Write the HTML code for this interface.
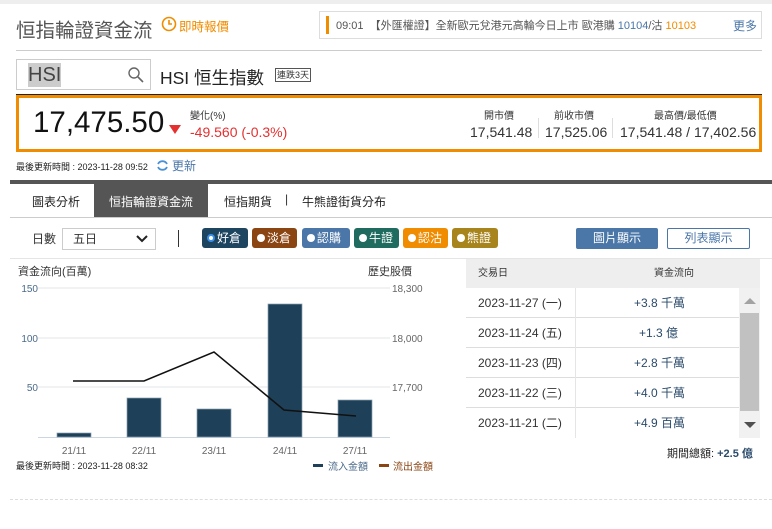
<!DOCTYPE html>
<html><head><meta charset="utf-8"><style>
*{margin:0;padding:0;box-sizing:border-box}
body{width:772px;height:529px;background:#fff;font-family:"Liberation Sans","Noto Sans CJK TC",sans-serif;color:#333;position:relative;overflow:hidden}
.a{position:absolute;white-space:nowrap}
.btn{position:absolute;top:228px;height:20px;color:#fff;font-size:12px;line-height:20px;border-radius:3px;padding-left:5px}
.btn i{display:inline-block;width:8px;height:8px;border-radius:50%;background:#fff;margin-right:2px;vertical-align:0}
.row{position:absolute;left:466px;width:273px;height:30px;border-bottom:1px solid #ddd;font-size:12px;line-height:30px}
.row span{position:absolute}
</style></head><body>
<div class="a" style="left:0;top:0;width:772px;height:4px;background:#eee"></div>
<div class="a" style="left:16px;top:14px;font-size:19.5px;color:#555">恒指輪證資金流</div>
<svg class="a" style="left:161px;top:16px" width="16" height="16"><circle cx="8" cy="8" r="6.5" fill="none" stroke="#f08c00" stroke-width="1.6"/><path d="M8 4v4h3" fill="none" stroke="#f08c00" stroke-width="1.6"/></svg>
<div class="a" style="left:179px;top:16px;font-size:12.5px;color:#f08c00">即時報價</div>
<div class="a" style="left:319px;top:11px;width:443px;height:28px;border:1px solid #ddd"></div>
<div class="a" style="left:326px;top:16px;width:3px;height:18px;background:#f08c00"></div>
<div class="a" style="left:336px;top:17px;font-size:11px;color:#555">09:01 &nbsp;【外匯權證】全新歐元兌港元高輪今日上市 歐港購 <b style="color:#4a76a8;font-weight:normal">10104</b>/沽 <b style="color:#f08c00;font-weight:normal">10103</b></div>
<div class="a" style="left:733px;top:17px;font-size:12px;color:#4a76a8">更多</div>
<div class="a" style="left:16px;top:50px;width:746px;height:1px;background:#ccc"></div>
<div class="a" style="left:16px;top:59px;width:135px;height:31px;border:1px solid #ccc"></div>
<div class="a" style="left:28px;top:63px;font-size:20px;background:#ccc;color:#444;line-height:24px">HSI</div>
<svg class="a" style="left:127px;top:66px" width="18" height="18"><circle cx="7" cy="7" r="5" fill="none" stroke="#666" stroke-width="1.4"/><path d="M11 11l5 5" stroke="#666" stroke-width="1.6"/></svg>
<div class="a" style="left:160px;top:65px;font-size:17.5px;color:#222">HSI 恒生指數</div>
<div class="a" style="left:275px;top:68px;font-size:9px;border:1px solid #555;padding:0 1px;line-height:12px">連跌3天</div>
<div class="a" style="left:16px;top:94px;width:746px;height:1px;background:#222"></div>
<div class="a" style="left:16px;top:95px;width:746px;height:57px;border:3px solid #f08c00"></div>
<div class="a" style="left:33px;top:106px;font-size:29.5px;color:#111">17,475.50</div>
<div class="a" style="left:169px;top:125px;width:0;height:0;border-left:6px solid transparent;border-right:6px solid transparent;border-top:9px solid #e53030"></div>
<div class="a" style="left:190px;top:107px;font-size:10px">變化(%)</div>
<div class="a" style="left:190px;top:124px;font-size:14px;color:#e53030">-49.560 (-0.3%)</div>
<div class="a" style="left:484px;top:107px;font-size:10px">開市價</div>
<div class="a" style="left:470px;top:124px;font-size:14px">17,541.48</div>
<div class="a" style="left:538px;top:118px;width:1px;height:20px;background:#ddd"></div>
<div class="a" style="left:554px;top:107px;font-size:10px">前收市價</div>
<div class="a" style="left:545px;top:124px;font-size:14px">17,525.06</div>
<div class="a" style="left:612px;top:118px;width:1px;height:20px;background:#ddd"></div>
<div class="a" style="left:654px;top:107px;font-size:10px">最高價/最低價</div>
<div class="a" style="left:620px;top:124px;font-size:14px">17,541.48 / 17,402.56</div>
<div class="a" style="left:16px;top:160px;font-size:9px;color:#222">最後更新時間 : 2023-11-28 09:52</div>
<svg class="a" style="left:156px;top:159px" width="13" height="13"><path d="M11 5A5 5 0 0 0 2 5M2 8a5 5 0 0 0 9 0" fill="none" stroke="#4a90d9" stroke-width="1.8"/></svg>
<div class="a" style="left:172px;top:157px;font-size:12px;color:#4a76a8">更新</div>
<div class="a" style="left:10px;top:180px;width:762px;height:4px;background:#555"></div>
<div class="a" style="left:94px;top:184px;width:114px;height:33px;background:#555"></div>
<div class="a" style="left:32px;top:193px;font-size:12px;color:#222">圖表分析</div>
<div class="a" style="left:109px;top:193px;font-size:12px;color:#fff">恒指輪證資金流</div>
<div class="a" style="left:224px;top:193px;font-size:12px;color:#222">恒指期貨</div>
<div class="a" style="left:285px;top:192px;font-size:12px;color:#333">|</div>
<div class="a" style="left:302px;top:193px;font-size:12px;color:#222">牛熊證街貨分布</div>
<div class="a" style="left:10px;top:217px;width:762px;height:1px;background:#ccc"></div>
<div class="a" style="left:32px;top:230px;font-size:12px">日數</div>
<div class="a" style="left:62px;top:228px;width:94px;height:22px;border:1px solid #ccc;font-size:12px;line-height:20px;padding-left:10px">五日</div>
<svg class="a" style="left:135px;top:234px" width="14" height="10"><path d="M2 2l5 5 5-5" fill="none" stroke="#222" stroke-width="2"/></svg>
<div class="a" style="left:178px;top:230px;width:1px;height:17px;background:#333"></div>
<div class="btn" style="left:202px;width:46px;background:#1e4560"><i style="background:#fff;border:2px solid #3a8ee6"></i>好倉</div>
<div class="btn" style="left:252px;width:45px;background:#8b4513"><i></i>淡倉</div>
<div class="btn" style="left:302px;width:48px;background:#4a76a8"><i></i>認購</div>
<div class="btn" style="left:354px;width:45px;background:#1f6b5f"><i></i>牛證</div>
<div class="btn" style="left:403px;width:45px;background:#ef8c00"><i></i>認沽</div>
<div class="btn" style="left:452px;width:46px;background:#a8841c"><i></i>熊證</div>
<div class="a" style="left:576px;top:228px;width:82px;height:21px;background:#4a76a8;color:#fff;font-size:12px;line-height:21px;text-align:center;border-radius:2px">圖片顯示</div>
<div class="a" style="left:667px;top:228px;width:83px;height:21px;border:1px solid #4a76a8;color:#4a76a8;font-size:12px;line-height:19px;text-align:center;border-radius:2px">列表顯示</div>
<div class="a" style="left:10px;top:258px;width:762px;height:1px;background:#e5e5e5"></div>
<div class="a" style="left:18px;top:263px;font-size:11px">資金流向(百萬)</div>
<div class="a" style="left:368px;top:263px;font-size:11px">歷史股價</div>
<svg class="a" style="left:0;top:270px" width="460" height="210" font-family="Liberation Sans" font-size="10">
<g stroke="#e3e6ea"><line x1="38" y1="18" x2="390" y2="18"/><line x1="38" y1="68" x2="390" y2="68"/><line x1="38" y1="117" x2="390" y2="117"/></g>
<line x1="38" y1="167.5" x2="390" y2="167.5" stroke="#ccd6e0"/>
<g fill="#4a6a8a" text-anchor="end"><text x="38" y="22">150</text><text x="38" y="72">100</text><text x="38" y="121">50</text></g>
<g fill="#666"><text x="392" y="22">18,300</text><text x="392" y="72">18,000</text><text x="392" y="121">17,700</text></g>
<g fill="#1e4059" stroke="#8aa0b4" stroke-width=".7"><rect x="57" y="163" width="34" height="4"/><rect x="127" y="128" width="34" height="39"/><rect x="197" y="139" width="34" height="28"/><rect x="268" y="34" width="34" height="133"/><rect x="338" y="130" width="34" height="37"/></g>
<polyline points="73,111 144,111 214,82 284,140 356,146" fill="none" stroke="#111" stroke-width="1.5"/>
<g fill="#666" text-anchor="middle"><text x="74" y="184">21/11</text><text x="144" y="184">22/11</text><text x="214" y="184">23/11</text><text x="285" y="184">24/11</text><text x="355" y="184">27/11</text></g>
<text x="16" y="199" fill="#222" font-size="9">最後更新時間 : 2023-11-28 08:32</text>
<rect x="313" y="194" width="10" height="3" fill="#1e4059"/><text x="328" y="200" fill="#4a6a8a">流入金額</text>
<rect x="379" y="194" width="10" height="3" fill="#8b4513"/><text x="393" y="200" fill="#8b4513">流出金額</text>
</svg>
<div class="a" style="left:466px;top:259px;width:294px;height:29px;background:#eee;font-size:10px;line-height:29px"><span style="position:absolute;left:12px">交易日</span><span style="position:absolute;left:188px">資金流向</span></div>
<div class="row" style="top:288px"><span style="left:12px">2023-11-27 (一)</span><span style="left:168px;color:#2a4a6a">+3.8 千萬</span></div>
<div class="row" style="top:318px"><span style="left:12px">2023-11-24 (五)</span><span style="left:173px;color:#2a4a6a">+1.3 億</span></div>
<div class="row" style="top:348px"><span style="left:12px">2023-11-23 (四)</span><span style="left:168px;color:#2a4a6a">+2.8 千萬</span></div>
<div class="row" style="top:378px"><span style="left:12px">2023-11-22 (三)</span><span style="left:168px;color:#2a4a6a">+4.0 千萬</span></div>
<div class="row" style="top:408px;border-bottom:none"><span style="left:12px">2023-11-21 (二)</span><span style="left:168px;color:#2a4a6a">+4.9 百萬</span></div>
<div class="a" style="left:575px;top:288px;width:1px;height:150px;background:#e5e5e5"></div>
<div class="a" style="left:739px;top:288px;width:21px;height:150px;background:#f1f1f1"></div>
<div class="a" style="left:740px;top:313px;width:19px;height:98px;background:#c1c1c1"></div>
<div class="a" style="left:744px;top:298px;border-left:6px solid transparent;border-right:6px solid transparent;border-bottom:6px solid #a3a3a3"></div>
<div class="a" style="left:744px;top:422px;border-left:6px solid transparent;border-right:6px solid transparent;border-top:6px solid #505050"></div>
<div class="a" style="left:667px;top:445px;font-size:11px;color:#222">期間總額: <b style="color:#2a4a6a">+2.5 億</b></div>
<div class="a" style="left:10px;top:499px;width:762px;border-top:1px dashed #ddd"></div>
</body></html>
